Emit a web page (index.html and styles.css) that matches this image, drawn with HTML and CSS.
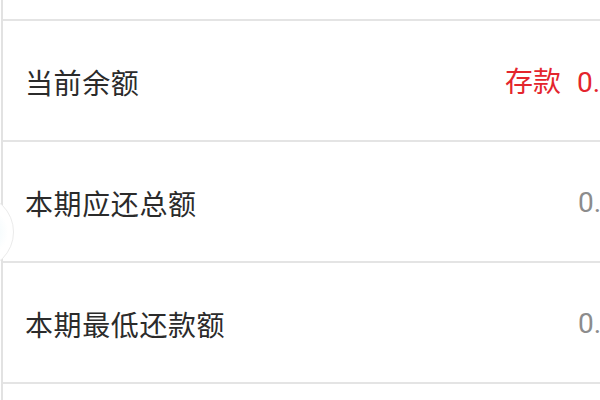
FILE: index.html
```html
<!DOCTYPE html>
<html lang="zh">
<head>
<meta charset="utf-8">
<link rel="stylesheet" href="styles.css">
</head>
<body>
<div class="page">
  <div class="list">
    <div class="row row-top"></div>
    <div class="row">
      <span class="label">当前余额</span>
      <span class="value red"><span class="tag">存款</span>0.00</span>
    </div>
    <div class="row">
      <span class="label">本期应还总额</span>
      <span class="value">0.00</span>
    </div>
    <div class="row">
      <span class="label">本期最低还款额</span>
      <span class="value">0.00</span>
    </div>
    <div class="row row-bottom"></div>
  </div>
  <div class="handle"></div>
</div>
</body>
</html>
```

FILE: styles.css
```css
html, body {
  margin: 0;
  padding: 0;
  background: #ffffff;
  overflow: hidden;
  width: 600px;
  height: 400px;
}
.page {
  position: relative;
  width: 600px;
  height: 400px;
  overflow: hidden;
}
.list {
  width: 680px;
  margin-left: 1px;
  border-left: 2px solid #e2e2e2;
  height: 400px;
  font-family: "Noto Sans CJK SC", "Noto Sans", sans-serif;
}
.row {
  height: 119px;
  border-bottom: 2px solid #e4e4e4;
  display: flex;
  align-items: center;
  justify-content: space-between;
  padding: 0 0 0 22px;
  box-sizing: content-box;
}
.row-top {
  height: 19px;
}
.row-bottom {
  border-bottom: none;
}
.label {
  font-size: 28px;
  letter-spacing: 0.6px;
  color: #2b2b2b;
  line-height: 1;
  padding-top: 2px;
}
.value {
  font-family: Roboto, "Noto Sans CJK SC", sans-serif;
  font-size: 28px;
  color: #8c8c8c;
  line-height: 1;
  width: 105px;
  padding-top: 2px;
}
.value.red {
  color: #e4252d;
  width: 178px;
}
.tag {
  font-family: "Noto Sans CJK SC", sans-serif;
  margin-right: 16px;
}
.handle {
  position: absolute;
  left: -62px;
  top: 194px;
  width: 74px;
  height: 74px;
  border-radius: 50%;
  border: 1px solid #ebebeb;
  background: radial-gradient(circle at 62% 50%, #eaf7fa 0, #ffffff 40%);
}
```
